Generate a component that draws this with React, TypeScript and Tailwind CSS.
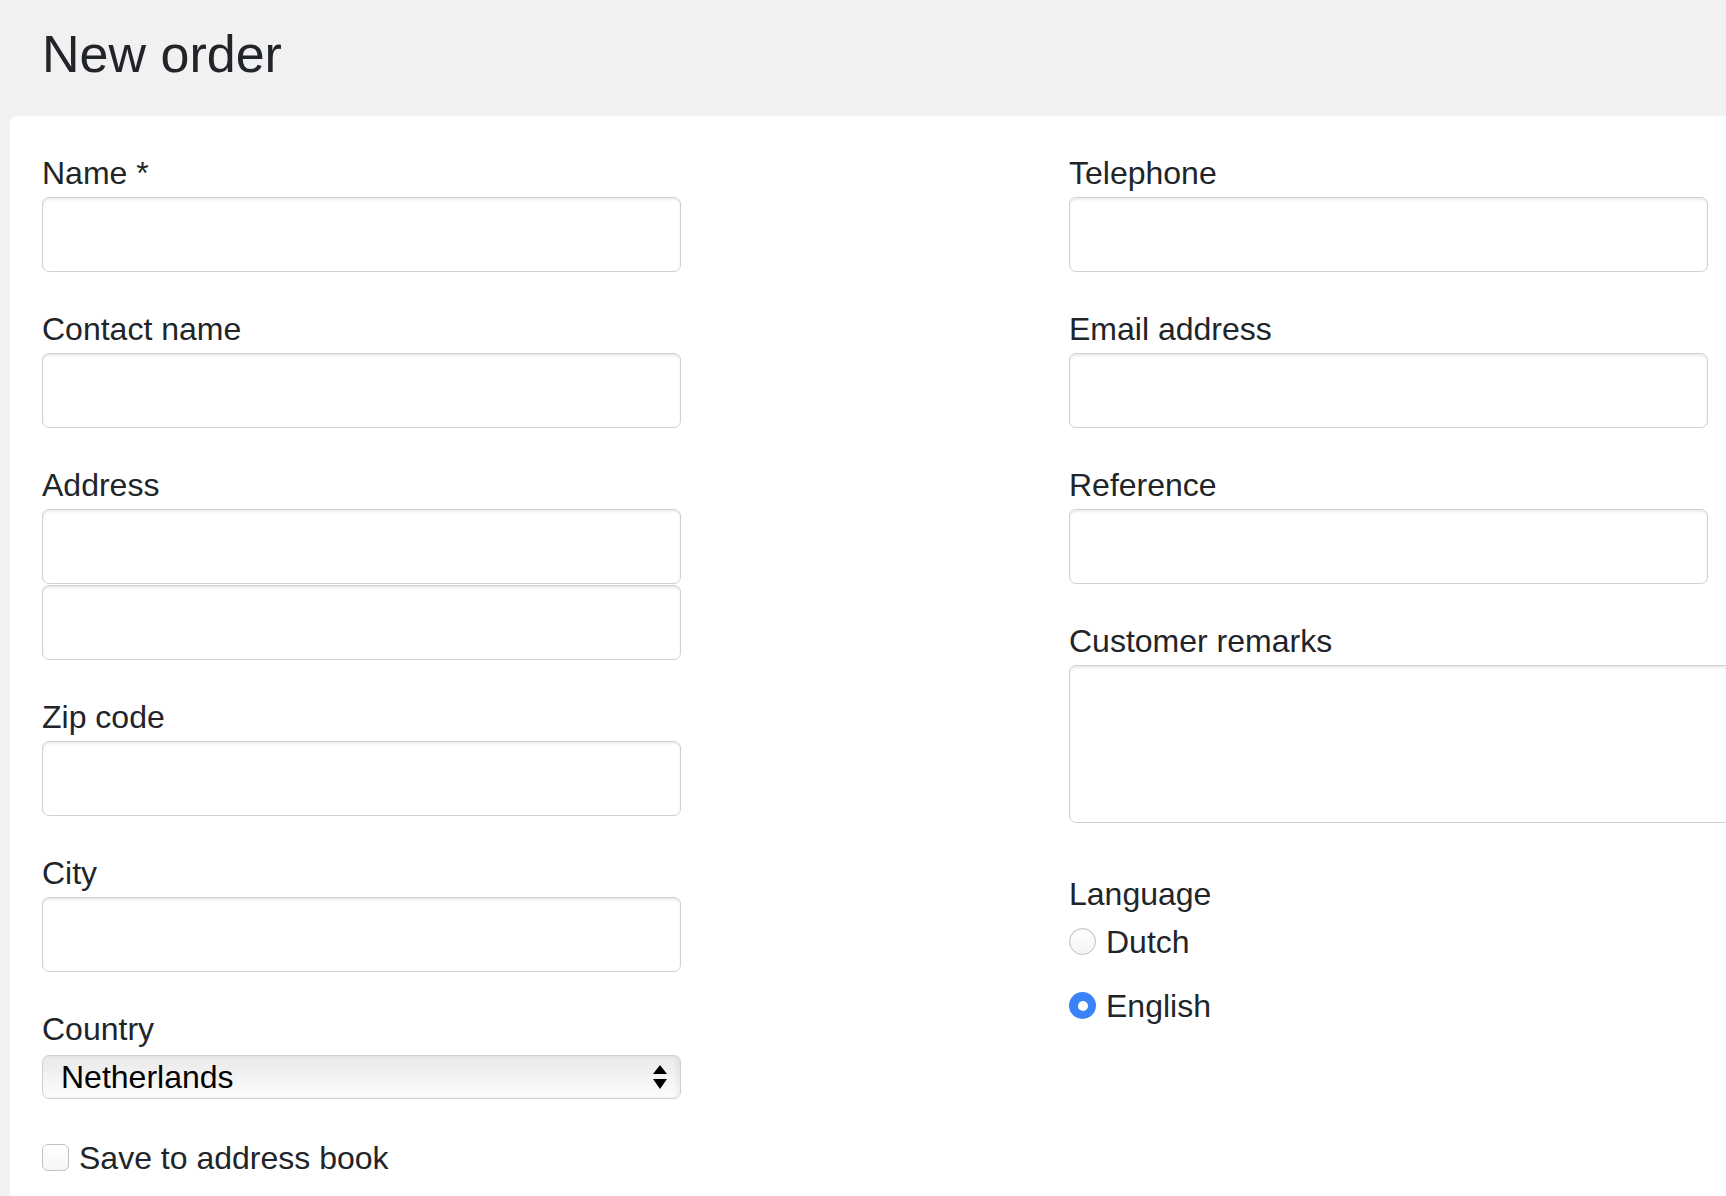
import React from "react";

const FONT = "font-['Liberation_Sans',Arial,Helvetica,sans-serif]";

const inputCls =
  "block h-[75px] w-[639px] rounded-[7px] border border-[#ccd1d7] bg-white px-4 text-[32px] text-[#212529] shadow-[inset_0_2px_2px_rgba(0,0,0,0.08)] outline-none";

function Label({ children }: { children: React.ReactNode }) {
  return <label className="block text-[32px] leading-[47px] text-[#212529]">{children}</label>;
}

function Field({ label, rows = 1 }: { label: string; rows?: number }) {
  return (
    <div className="mb-[34px]">
      <Label>{label}</Label>
      <div className="flex flex-col gap-[1px]">
        {Array.from({ length: rows }).map((_, i) => (
          <input key={i} type="text" className={inputCls} />
        ))}
      </div>
    </div>
  );
}

function Radio({ label, checked }: { label: string; checked?: boolean }) {
  return (
    <div className="flex h-[47px] items-center gap-[10px]">
      {checked ? (
        <span className="flex h-[27px] w-[27px] items-center justify-center rounded-full bg-[#3a82f7]">
          <span className="h-[10px] w-[10px] rounded-full bg-white" />
        </span>
      ) : (
        <span className="h-[27px] w-[27px] rounded-full border border-[#bdbdbd] bg-gradient-to-b from-white to-[#f4f4f4] shadow-[inset_0_1px_1px_rgba(0,0,0,0.06)]" />
      )}
      <span className="text-[32px] text-[#212529]">{label}</span>
    </div>
  );
}

export default function App() {
  return (
    <div className={`min-h-screen w-full overflow-hidden bg-[#f1f1f1] ${FONT}`}>
      <header className="pl-[42px] pt-[22px] pb-[29px]">
        <h1 className="text-[52px] font-normal leading-[65px] text-[#212529]">New order</h1>
      </header>

      <main className="ml-[10px] min-h-[1100px] rounded-tl-[8px] bg-white pl-[32px] pt-[34px]">
        <div className="flex">
          {/* left column */}
          <div className="w-[1027px] shrink-0">
            <Field label="Name *" />
            <Field label="Contact name" />
            <Field label="Address" rows={2} />
            <Field label="Zip code" />
            <Field label="City" />

            <div>
              <Label>Country</Label>
              <button
                type="button"
                className="mt-[2px] flex h-[44px] w-[639px] items-center justify-between rounded-[7px] border border-[#cdd1d6] bg-gradient-to-b from-[#e9e9e9] via-[#f3f3f3] to-[#fcfcfc] pl-[18px] pr-[12px] shadow-[inset_-3px_0_4px_rgba(0,0,0,0.05)]"
              >
                <span className="text-[32px] leading-none text-black">Netherlands</span>
                <svg width="16" height="26" viewBox="0 0 16 26" aria-hidden>
                  <path d="M8 1 L15 10 L1 10 Z" fill="#000" />
                  <path d="M1 15 L15 15 L8 25 Z" fill="#000" />
                </svg>
              </button>
            </div>

            <div className="mt-[35px] flex h-[47px] items-center gap-[10px]">
              <span className="h-[27px] w-[27px] rounded-[6px] border border-[#c2c2c2] bg-gradient-to-b from-white to-[#f6f6f6]" />
              <span className="text-[32px] text-[#212529]">Save to address book</span>
            </div>
          </div>

          {/* right column */}
          <div className="shrink-0">
            <Field label="Telephone" />
            <Field label="Email address" />
            <Field label="Reference" />

            <div className="mb-[48px]">
              <Label>Customer remarks</Label>
              <textarea className="block h-[158px] w-[800px] resize-none rounded-[7px] border border-[#ccd1d7] bg-white shadow-[inset_0_2px_2px_rgba(0,0,0,0.08)] outline-none" />
            </div>

            <Label>Language</Label>
            <div className="flex flex-col gap-[17px]">
              <Radio label="Dutch" />
              <Radio label="English" checked />
            </div>
          </div>
        </div>
      </main>
    </div>
  );
}
